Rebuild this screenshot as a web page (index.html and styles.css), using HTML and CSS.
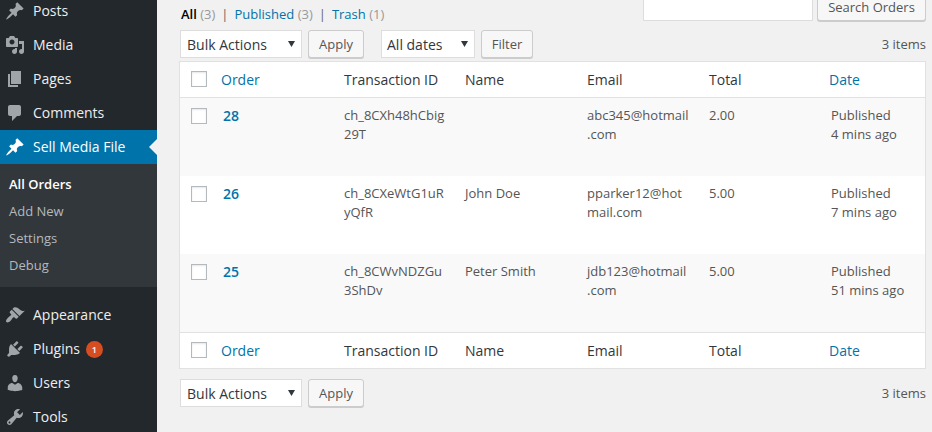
FILE: index.html
```html
<!DOCTYPE html>
<html lang="en">
<head>
<meta charset="utf-8">
<title>Orders</title>
<link rel="stylesheet" href="styles.css">
</head>
<body>
<div class="admin">
  <nav class="sidebar">
    <a class="item"><svg class="icon" viewBox="0 0 20 20"><path d="M10.44 3.02l1.82-1.82 6.36 6.35-1.83 1.82c-1.05-.68-2.48-.57-3.41.36l-.75.75c-.92.93-1.04 2.35-.35 3.41l-1.83 1.82-2.41-2.41-2.8 2.79c-.42.42-3.38 2.71-3.8 2.29s1.86-3.39 2.28-3.81l2.79-2.79L4.1 9.36l1.83-1.82c1.05.69 2.48.57 3.4-.36l.75-.75c.93-.92 1.05-2.35.36-3.41z"/></svg><span>Posts</span></a>
    <a class="item"><svg class="icon" viewBox="0 0 20 20"><path d="M13 11V4c0-.55-.45-1-1-1h-1.67L9 1H5L3.67 3H2c-.55 0-1 .45-1 1v7c0 .55.45 1 1 1h10c.55 0 1-.45 1-1zM7 4.5c1.38 0 2.5 1.12 2.5 2.5S8.38 9.5 7 9.5 4.5 8.38 4.5 7 5.62 4.5 7 4.5zM14 6h5v10.5c0 1.38-1.12 2.5-2.5 2.5S14 17.88 14 16.5s1.12-2.5 2.5-2.5c.17 0 .34.02.5.05V9h-3V6zm-4 8.05V13h2v3.5c0 1.38-1.12 2.5-2.5 2.5S7 17.88 7 16.5 8.12 14 9.5 14c.17 0 .34.02.5.05z"/></svg><span>Media</span></a>
    <a class="item"><svg class="icon" viewBox="0 0 20 20"><path d="M6 15V2h10v13H6zm-1 1h8v2H3V5h2v11z"/></svg><span>Pages</span></a>
    <a class="item"><svg class="icon" viewBox="0 0 20 20"><path d="M5 2h9c1.1 0 2 .9 2 2v7c0 1.1-.9 2-2 2h-2l-5 5v-5H5c-1.1 0-2-.9-2-2V4c0-1.1.9-2 2-2z"/></svg><span>Comments</span></a>
    <a class="item current"><svg class="icon" viewBox="0 0 20 20"><path d="M10.44 3.02l1.82-1.82 6.36 6.35-1.83 1.82c-1.05-.68-2.48-.57-3.41.36l-.75.75c-.92.93-1.04 2.35-.35 3.41l-1.83 1.82-2.41-2.41-2.8 2.79c-.42.42-3.38 2.71-3.8 2.29s1.86-3.39 2.28-3.81l2.79-2.79L4.1 9.36l1.83-1.82c1.05.69 2.48.57 3.4-.36l.75-.75c.93-.92 1.05-2.35.36-3.41z"/></svg><span>Sell Media File</span></a>
    <div class="submenu">
      <a class="active">All Orders</a>
      <a>Add New</a>
      <a>Settings</a>
      <a>Debug</a>
    </div>
    <a class="item"><svg class="icon" viewBox="0 0 20 20"><path d="M14.48 11.06L7.41 3.99l1.5-1.5c.5-.56 2.3-.47 3.51.32 1.21.8 1.43 1.28 2.91 2.1 1.18.64 2.45 1.26 4.45.85zm-.71.71L6.7 4.7 4.93 6.47c-.39.39-.39 1.02 0 1.41l1.06 1.06c.39.39.39 1.03 0 1.42-.6.6-1.43 1.11-2.21 1.69-.35.26-.7.53-1.01.84C1.43 14.23.4 16.08 1.4 17.07c.99 1 2.84-.03 4.18-1.36.31-.31.58-.66.85-1.02.57-.78 1.08-1.61 1.69-2.21.39-.39 1.02-.39 1.41 0l1.06 1.06c.39.39 1.02.39 1.41 0z"/></svg><span>Appearance</span></a>
    <a class="item"><svg class="icon" viewBox="0 0 20 20"><path d="M13.11 4.36L9.87 7.6 8 5.73l3.24-3.24c.35-.34 1.05-.2 1.56.32.52.51.66 1.21.31 1.55zm-8 1.77l.91-1.12 9.01 9.01-1.19.84c-.71.71-2.63 1.16-3.82 1.16H6.14L4.9 17.26c-.59.59-1.54.59-2.12 0-.59-.58-.59-1.53 0-2.12l1.24-1.24v-3.88c0-1.13.4-3.19 1.09-3.89zm7.26 3.97l3.24-3.24c.34-.35 1.04-.21 1.55.31.52.51.66 1.21.31 1.55l-3.24 3.25z"/></svg><span>Plugins</span><span class="count">1</span></a>
    <a class="item"><svg class="icon" viewBox="0 0 20 20"><path d="M10 9.25c-2.27 0-2.73-3.44-2.73-3.44C7 4.02 7.82 2 9.97 2c2.16 0 2.98 2.02 2.71 3.81 0 0-.41 3.44-2.68 3.44zm0 2.57L12.72 10c2.39 0 4.52 2.33 4.52 4.53v2.49s-3.65 1.13-7.24 1.13c-3.65 0-7.24-1.13-7.24-1.13v-2.49c0-2.25 1.94-4.48 4.47-4.48z"/></svg><span>Users</span></a>
    <a class="item"><svg class="icon" viewBox="0 0 20 20"><path d="M16.68 9.77c-1.34 1.34-3.3 1.67-4.95.99l-5.41 6.52c-.99.99-2.59.99-3.58 0s-.99-2.59 0-3.57l6.52-5.42c-.68-1.65-.35-3.61.99-4.95 1.28-1.28 3.12-1.62 4.72-1.06l-2.89 2.89 2.82 2.82 2.86-2.87c.53 1.58.18 3.39-1.08 4.65zM3.81 16.21c.4.39 1.04.39 1.43 0 .4-.4.4-1.04 0-1.43-.39-.4-1.03-.4-1.43 0-.39.39-.39 1.03 0 1.43z"/></svg><span>Tools</span></a>
  </nav>
  <main class="content">
    <header class="top">
      <div class="views"><a class="all">All</a> <i>(3)</i><b>|</b><a>Published</a> <i>(3)</i><b>|</b><a>Trash</a> <i>(1)</i></div>
      <div class="search"><input type="text" aria-label="Search"><button class="button search-button">Search Orders</button></div>
    </header>
    <div class="tablenav">
      <div class="select bulk"><span>Bulk Actions</span><svg class="arrow" viewBox="0 0 7 6"><path d="M0 0h7L3.500 6z"/></svg></div>
      <button class="button apply">Apply</button>
      <div class="select dates"><span>All dates</span><svg class="arrow" viewBox="0 0 7 6"><path d="M0 0h7L3.500 6z"/></svg></div>
      <button class="button filter">Filter</button>
      <span class="total">3 items</span>
    </div>
    <section class="orders">
      <div class="row heading"><span class="check"></span><a>Order</a><span>Transaction ID</span><span>Name</span><span>Email</span><span>Total</span><a>Date</a></div>
      <div class="row order alt"><span class="check"></span><a class="number">28</a><span>ch_8CXh48hCbig<br>29T</span><span></span><span>abc345@hotmail<br>.com</span><span>2.00</span><span class="date">Published<br>4 mins ago</span></div>
      <div class="row order"><span class="check"></span><a class="number">26</a><span>ch_8CXeWtG1uR<br>yQfR</span><span>John Doe</span><span>pparker12@hot<br>mail.com</span><span>5.00</span><span class="date">Published<br>7 mins ago</span></div>
      <div class="row order alt"><span class="check"></span><a class="number">25</a><span>ch_8CWvNDZGu<br>3ShDv</span><span>Peter Smith</span><span>jdb123@hotmail<br>.com</span><span>5.00</span><span class="date">Published<br>51 mins ago</span></div>
      <div class="row heading footing"><span class="check"></span><a>Order</a><span>Transaction ID</span><span>Name</span><span>Email</span><span>Total</span><a>Date</a></div>
    </section>
    <div class="tablenav bottom">
      <div class="select bulk"><span>Bulk Actions</span><svg class="arrow" viewBox="0 0 7 6"><path d="M0 0h7L3.500 6z"/></svg></div>
      <button class="button apply">Apply</button>
      <span class="total">3 items</span>
    </div>
  </main>
</div>
</body>
</html>
```
FILE: styles.css
```css
* { box-sizing: border-box; }
body {
  margin: 0;
  height: 432px;
  overflow: hidden;
  background: #f1f1f1;
  color: #555;
  font: 13px/19px "Open Sans", sans-serif;
}
a { color: #0073aa; }
.admin { display: flex; height: 432px; overflow: hidden; }

.sidebar { width: 157px; flex: none; background: #23282d; margin-top: -6px; height: 438px; overflow: hidden; }
.item { display: flex; align-items: center; height: 34px; padding-left: 5px; color: #eee; font-size: 14px; line-height: 18px; }
.icon { width: 20px; height: 20px; margin-right: 8px; fill: #a0a5aa; }
.current { position: relative; background: #0073aa; color: #fff; }
.current .icon { fill: #fff; }
.current::after {
  content: "";
  position: absolute;
  right: 0;
  top: 9px;
  border: 8px solid transparent;
  border-left: 0;
  border-right-color: #f1f1f1;
}
.submenu { height: 123px; margin-bottom: 11px; padding: 7px 0 0 9px; background: #32373c; }
.submenu a { display: block; height: 27px; line-height: 27px; color: #b4b9be; }
.submenu .active { color: #fff; font-weight: 600; }
.count { width: 17px; height: 17px; margin-left: 6px; border-radius: 50%; background: #d54e21; color: #fff; font-size: 9px; font-weight: 600; line-height: 17px; text-align: center; }

.content { flex: 1; padding: 0 6px 0 23px; }
.top { display: flex; justify-content: space-between; height: 30px; }
.views { padding: 5px 0 0 1px; white-space: nowrap; }
.views .all { color: #000; font-weight: 600; }
.views i { color: #999; font-style: normal; }
.views b { margin: 0 6px; color: #666; font-weight: 400; }
.search { display: flex; gap: 4px; margin-top: -7px; }
.search input { width: 170px; height: 28px; border: 1px solid #ddd; background: #fff; padding: 0; }
.button {
  height: 28px;
  padding: 0;
  border: 1px solid #ccc;
  border-radius: 3px;
  background: #f7f7f7;
  box-shadow: 0 1px 0 #ccc;
  color: #555;
  font: 13px/26px "Open Sans", sans-serif;
}
.search-button { width: 109px; }
.tablenav { display: flex; height: 31px; }
.select { display: flex; align-items: center; justify-content: space-between; height: 28px; padding: 0 6px; border: 1px solid #ddd; background: #fff; color: #32373c; font-size: 14px; }
.arrow { width: 7px; height: 6px; fill: #32373c; margin-bottom: 1px; }
.bulk { width: 122px; }
.apply { width: 56px; margin-left: 6px; }
.dates { width: 94px; margin-left: 17px; padding-left: 5px; }
.filter { width: 52px; margin-left: 6px; }
.total { margin-left: auto; line-height: 28px; }

.orders { margin-left: -1px; border: 1px solid #e1e1e1; background: #fff; }
.row {
  display: grid;
  grid-template-columns: 41px 123px 121px 122px 122px 120px 1fr;
}
.heading { height: 36px; line-height: 36px; color: #32373c; font-size: 14px; border-bottom: 1px solid #e1e1e1; }
.check { width: 16px; height: 16px; margin: 10px 0 0 11px; border: 1px solid #b4b9be; background: #fff; box-shadow: inset 0 1px 2px rgba(0,0,0,.1); }
.heading .check { margin-top: 9px; }
.order { height: 78px; padding-top: 8px; }
.order .check { margin-top: 2px; }
.alt { background: #f9f9f9; }
.number { padding-left: 2px; font-size: 14px; font-weight: 600; }
.date { padding-left: 2px; }
.footing { border-top: 1px solid #e1e1e1; border-bottom: 0; }
.bottom { margin-top: 10px; }
```
